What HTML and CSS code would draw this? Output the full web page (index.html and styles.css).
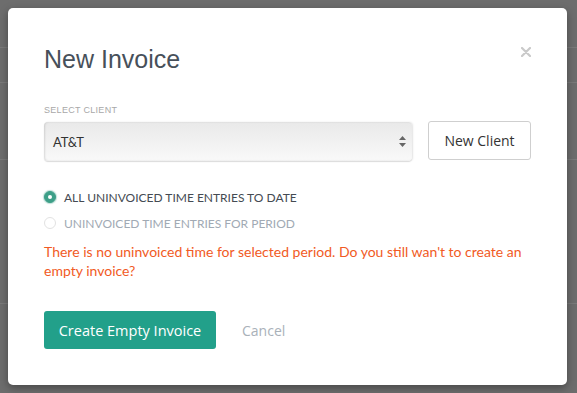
FILE: index.html
```html
<!DOCTYPE html>
<html>
<head>
<meta charset="utf-8">
<link rel="stylesheet" href="styles.css">
</head>
<body>
<div class="backdrop">
  <div class="modal">
    <div class="modal-head">
      <h1 class="title">New Invoice</h1>
      <svg class="close" width="10" height="10" viewBox="0 0 10 10"><path d="M1 1 L9 9 M9 1 L1 9" stroke="#c9c9c9" stroke-width="2.2" stroke-linecap="round"/></svg>
    </div>
    <label class="field-label">SELECT CLIENT</label>
    <div class="client-row">
      <div class="select">
        <span class="select-value">AT&amp;T</span>
        <svg class="select-arrows" width="7" height="11" viewBox="0 0 7 11"><path d="M3.5 0 L7 4 L0 4 Z M0 7 L7 7 L3.5 11 Z" fill="#666"/></svg>
      </div>
      <button class="btn-outline">New Client</button>
    </div>
    <div class="radios">
      <div class="radio-row checked"><span class="radio"></span><span class="radio-label">ALL UNINVOICED TIME ENTRIES TO DATE</span></div>
      <div class="radio-row"><span class="radio"></span><span class="radio-label">UNINVOICED TIME ENTRIES FOR PERIOD</span></div>
    </div>
    <p class="warning">There is no uninvoiced time for selected period. Do you still wan't to create an empty invoice?</p>
    <div class="actions">
      <button class="btn-primary">Create Empty Invoice</button>
      <button class="btn-link">Cancel</button>
    </div>
  </div>
</div>
</body>
</html>
```
FILE: styles.css
```css
html, body {
  margin: 0;
  padding: 0;
}
body {
  width: 577px;
  height: 393px;
  overflow: hidden;
  background-color: #6d6d6d;
  background-image:
    linear-gradient(#7a7a7a, #7a7a7a),
    linear-gradient(#7a7a7a, #7a7a7a),
    linear-gradient(#7a7a7a, #7a7a7a),
    linear-gradient(#7a7a7a, #7a7a7a);
  background-size: 577px 1px, 577px 1px, 577px 1px, 577px 1px;
  background-position: 0 47px, 0 82px, 0 159px, 0 303px;
  background-repeat: no-repeat;
  font-family: Lato, "Liberation Sans", sans-serif;
}
.backdrop {
  padding: 8px 10px 8px 8px;
}
.modal {
  width: 559px;
  height: 377px;
  box-sizing: border-box;
  background: #fff;
  border-radius: 5px;
  box-shadow: 0 3px 8px rgba(0,0,0,0.35);
  padding: 36px 36px 0 36px;
  display: flex;
  flex-direction: column;
}
.modal-head {
  display: flex;
  justify-content: space-between;
  align-items: flex-start;
}
.title {
  margin: 0;
  font-family: "Liberation Sans", Arial, sans-serif;
  font-weight: normal;
  font-size: 25px;
  line-height: 30px;
  color: #47505a;
}
.close {
  display: block;
  margin-top: 3px;
}
.field-label {
  display: block;
  margin-top: 31px;
  font-family: "Liberation Sans", Arial, sans-serif;
  font-size: 9px;
  letter-spacing: 0.3px;
  color: #a8a8a8;
  line-height: 10px;
}
.client-row {
  margin-top: 7px;
  display: flex;
  align-items: flex-start;
  gap: 16px;
}
.select {
  width: 368px;
  height: 39px;
  box-sizing: border-box;
  border-radius: 4px;
  background: linear-gradient(#e9e9e9, #f9f9f9);
  box-shadow: inset 1px 0 2px rgba(0,0,0,0.12), 0 1px 1px rgba(0,0,0,0.12), 1px 0 2px rgba(0,0,0,0.1);
  display: flex;
  align-items: center;
  justify-content: space-between;
  padding: 0 6px 0 9px;
}
.select-value {
  font-size: 13px;
  color: #333;
  letter-spacing: -0.2px;
}
.select-arrows {
  display: block;
}
.btn-outline {
  width: 103px;
  height: 39px;
  box-sizing: border-box;
  border: 1px solid #cfcfcf;
  border-radius: 3px;
  background: #fff;
  font-family: "Open Sans", "Liberation Sans", sans-serif;
  font-size: 14px;
  color: #333;
  padding: 0;
  margin-top: -1px;
}
.radios {
  margin-top: 28px;
  display: flex;
  flex-direction: column;
  gap: 10px;
}
.radio-row {
  display: flex;
  align-items: center;
  gap: 8px;
  height: 16px;
}
.radio {
  width: 12px;
  height: 12px;
  border-radius: 50%;
  border: 1px solid #e2e2e2;
  box-sizing: border-box;
  background: #fff;
  position: relative;
}
.radio-row.checked .radio {
  background: #3d9f88;
  border-color: #3d9f88;
  box-shadow: 0 0 1px 1px rgba(61,159,136,0.35);
}
.radio-row.checked .radio::after {
  content: "";
  position: absolute;
  left: 3px;
  top: 3px;
  width: 4px;
  height: 4px;
  border-radius: 50%;
  background: #fff;
}
.radio-label {
  font-size: 12px;
  color: #a1aab4;
}
.radio-row.checked .radio-label {
  color: #444a52;
}
.warning {
  margin: 11px 0 0 0;
  font-size: 14px;
  line-height: 19px;
  color: #f15a24;
  width: 480px;
}
.actions {
  margin-top: 31px;
  display: flex;
  align-items: center;
  gap: 26px;
}
.btn-primary {
  width: 172px;
  height: 38px;
  border: none;
  border-radius: 3px;
  background: #22a08a;
  color: #fff;
  font-family: "Open Sans", "Liberation Sans", sans-serif;
  font-size: 14.5px;
  padding: 0;
}
.btn-link {
  border: none;
  background: none;
  padding: 0;
  font-family: "Open Sans", "Liberation Sans", sans-serif;
  font-size: 14px;
  color: #a9b1b9;
}
```
